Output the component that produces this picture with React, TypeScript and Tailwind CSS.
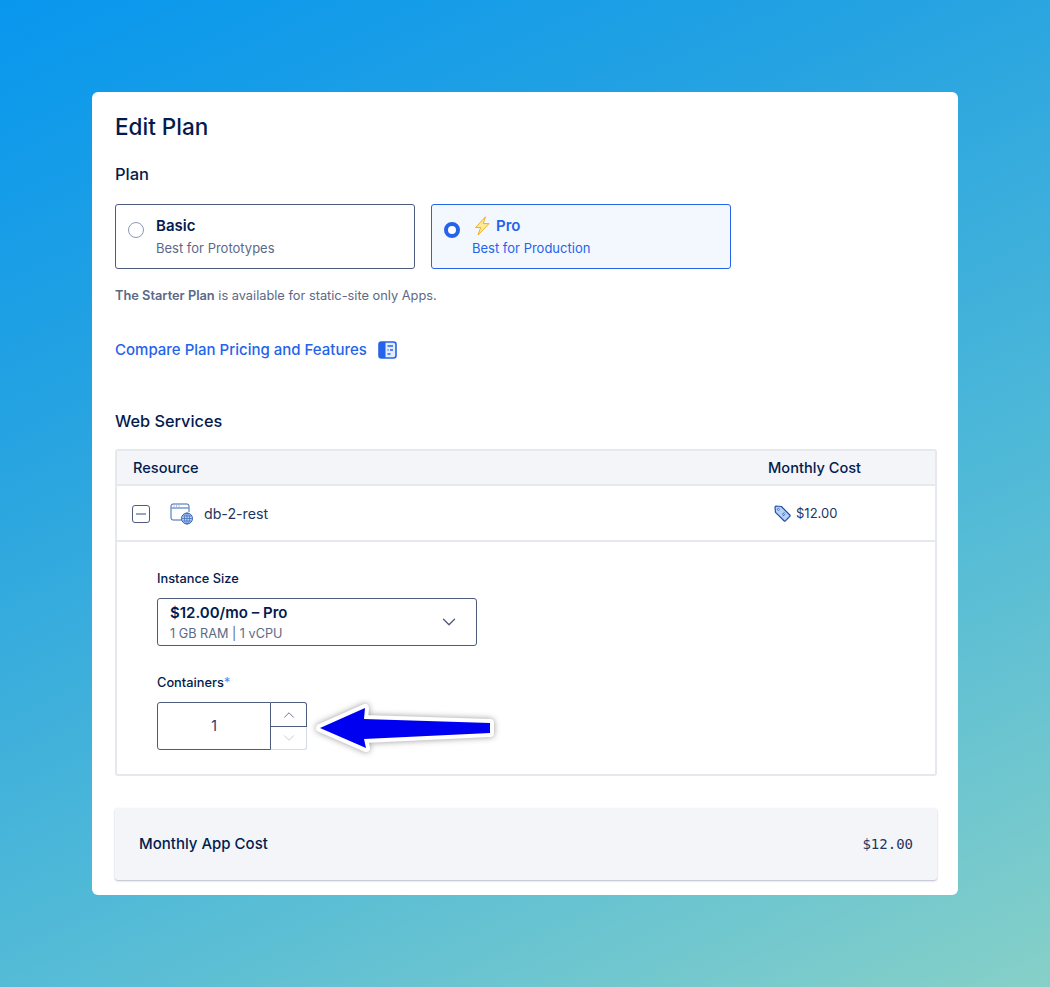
import { ChevronDown, ChevronUp } from "lucide-react";

const PlanIcon = () => (
  <svg width="19" height="18" viewBox="0 0 19 18" fill="none">
    <rect x="1" y="1" width="17" height="16" rx="2.5" fill="#e4edfd" stroke="#2563eb" strokeWidth="1.6" />
    <path d="M1 3a2 2 0 0 1 2-2h4.5v16H3a2 2 0 0 1-2-2z" fill="#2563eb" />
    <path d="M9.5 5h5.5M12 9h3M9.5 9h1M9.5 13h3" stroke="#2563eb" strokeWidth="1.5" />
  </svg>
);

const WebServiceIcon = () => (
  <svg width="24" height="22" viewBox="0 0 24 22" fill="none">
    <path d="M13 17H3a2 2 0 0 1-2-2V3a2 2 0 0 1 2-2h14a2 2 0 0 1 2 2v6" stroke="#3565b8" strokeWidth="1" />
    <path d="M1.5 5h17" stroke="#3565b8" strokeWidth="1" />
    <path d="M3.5 3h1M6 3h1M8.5 3h1" stroke="#3565b8" strokeWidth="0.8" />
    <circle cx="17" cy="15.5" r="5.5" fill="#bcd3f7" stroke="#3565b8" />
    <path d="M11.5 15.5h11M12.5 13h9M12.5 18h9M17 10v11" stroke="#3565b8" strokeWidth="0.7" />
    <ellipse cx="17" cy="15.5" rx="2.6" ry="5.5" stroke="#3565b8" strokeWidth="0.7" />
  </svg>
);

const TagIcon = () => (
  <svg width="17" height="17" viewBox="0 0 17 17" fill="none">
    <path d="M1 2.2 1.8 1l5.6.5 8.4 8.5a1 1 0 0 1 0 1.4l-4.4 4.4a1 1 0 0 1-1.4 0L1.5 7.4z" fill="#b9d0f5" stroke="#1f4fa8" strokeWidth="1.2" strokeLinejoin="round" />
    <circle cx="4.4" cy="4.4" r="1" fill="#fff" stroke="#1f4fa8" strokeWidth="0.7" />
    <path d="M8 9.5l2.5-2M8.8 11l2.5-2" stroke="#1f4fa8" strokeWidth="0.8" />
  </svg>
);

const Bolt = () => (
  <svg width="16" height="20" viewBox="0 0 16 20" fill="none">
    <path d="M11.5 0.8 1.5 11.5h5.2L4 19 15 7.6H9.2z" fill="#fdeb9c" stroke="#f5a70b" strokeWidth="0.9" strokeLinejoin="round" />
  </svg>
);

export default function App() {
  return (
    <div className="relative h-[987px] w-[1050px] overflow-hidden bg-[linear-gradient(155deg,#0897ee_0%,#26a3e1_30%,#52bad7_65%,#86d0c8_100%)] pt-[92px] pl-[92px] font-['Inter',sans-serif] text-[#031b4e]">
      <div className="h-[803px] w-[866px] rounded-md bg-white px-[23px] pt-[21px]">
        <h1 className="text-[22.5px] font-medium leading-[27px]">Edit Plan</h1>

        <h2 className="mt-[24px] text-[16.5px] font-medium leading-[20px]">Plan</h2>
        <div className="mt-[20px] flex gap-4">
          <div className="flex h-[65px] w-[300px] rounded-[3px] border border-[#4d5b7c] pl-3 pt-[11px]">
            <span className="mt-[6px] h-4 w-4 rounded-full border border-[#8b97b5] bg-white" />
            <div className="ml-3">
              <div className="text-[15px] font-semibold leading-[20px]">Basic</div>
              <div className="mt-[3px] text-[13px] leading-[18px] text-[#5b6987]">Best for Prototypes</div>
            </div>
          </div>
          <div className="flex h-[65px] w-[300px] rounded-[3px] border border-[#2563eb] bg-[#f3f8fe] pl-3 pt-[11px] text-[#2563eb]">
            <span className="mt-[6px] h-4 w-4 rounded-full border-[4px] border-[#2563eb] bg-white" />
            <div className="ml-3">
              <div className="flex h-5 items-center gap-[6px] text-[15px] font-semibold leading-[20px]">
                <span className="ml-[2px] flex">
                  <Bolt />
                </span>
                Pro
              </div>
              <div className="mt-[3px] text-[13px] leading-[18px]">Best for Production</div>
            </div>
          </div>
        </div>

        <p className="mt-[18px] text-[12.8px] leading-[18px] text-[#5b6987]">
          <span className="font-semibold">The Starter Plan</span> is available for static-site only Apps.
        </p>

        <a className="mt-[35px] flex items-center gap-[11px] text-[15px] font-medium leading-[20px] text-[#2563eb]">
          Compare Plan Pricing and Features
          <PlanIcon />
        </a>

        <h2 className="mt-[51px] text-[16.3px] font-medium leading-[20px]">Web Services</h2>

        <div className="mt-[18px] w-[822px] rounded-[3px] border-2 border-[#e5e8ed]">
          <div className="flex h-[33px] items-center justify-between bg-[#f3f5f9] pl-4 pt-[2px] text-[14.6px] font-medium">
            <span>Resource</span>
            <span className="w-[167px]">Monthly Cost</span>
          </div>
          <div className="flex h-[58px] items-center justify-between border-y-2 border-[#e5e8ed] pl-[15px] pt-px">
            <div className="flex items-center">
              <span className="flex h-[18px] w-[18px] items-center justify-center rounded-[3px] border border-[#4d5b7c]">
                <span className="h-[2px] w-[10px] bg-[#9aa5bd]" />
              </span>
              <span className="ml-[20px] flex">
                <WebServiceIcon />
              </span>
              <span className="ml-[10px] text-[14.2px] text-[#24365f]">db-2-rest</span>
            </div>
            <div className="flex w-[161px] items-center gap-[5px] text-[13px] text-[#24365f]">
              <TagIcon />
              $12.00
            </div>
          </div>
          <div className="h-[232px] pl-10 pt-[28px]">
            <label className="block text-[12.8px] font-medium leading-[18px]">Instance Size</label>
            <div className="mt-[10px] flex h-[48px] w-[320px] items-center justify-between rounded-[3px] border border-[#4d5b7c] pl-3 pr-4">
              <div>
                <div className="text-[15px] font-semibold leading-[20px]">$12.00/mo – Pro</div>
                <div className="mt-[3px] text-[12.7px] leading-[16px] text-[#5b6987]">1 GB RAM | 1 vCPU</div>
              </div>
              <ChevronDown size={22} strokeWidth={1.4} className="text-[#4d5b7c]" />
            </div>
            <label className="mt-[28px] block text-[12.8px] font-medium leading-[18px]">
              Containers<span className="text-[#3b9bf5]">*</span>
            </label>
            <div className="mt-[10px] flex h-[48px] w-[150px]">
              <div className="flex w-[114px] items-center justify-center rounded-l-[3px] border border-[#4d5b7c] pb-[2px] text-[14px] text-[#24365f]">
                1
              </div>
              <div className="flex w-[36px] flex-col">
                <div className="flex h-[25px] items-center justify-center rounded-tr-[3px] border-y border-r border-[#4d5b7c]">
                  <ChevronUp size={18} strokeWidth={1.3} className="text-[#6b7895]" />
                </div>
                <div className="flex h-[23px] items-center justify-center rounded-br-[3px] border-b border-r border-[#d5d9e2]">
                  <ChevronDown size={18} strokeWidth={1.3} className="text-[#c5cbd8]" />
                </div>
              </div>
            </div>
          </div>
        </div>

        <div className="mt-[32px] flex h-[72px] w-[822px] items-center justify-between rounded-[3px] bg-[#f3f5f9] px-6 shadow-[0_1px_2px_rgba(3,27,78,0.3)]">
          <span className="text-[15px] font-medium">Monthly App Cost</span>
          <span className="font-['DejaVu_Sans_Mono',monospace] text-[14px] text-[#24365f]">$12.00</span>
        </div>
      </div>

      <svg className="absolute left-[310px] top-[698px]" width="192" height="60" viewBox="0 0 192 60" fill="none">
        <path
          d="M10 30 L55 10 L54 21 L180 25 L180 35 L54 41 L56 50 Z"
          fill="#0000f0"
          stroke="#fff"
          strokeWidth="8"
          strokeLinejoin="round"
          paintOrder="stroke"
          style={{ filter: "drop-shadow(0 0 3px rgba(0,0,0,0.4))" }}
        />
      </svg>
    </div>
  );
}
